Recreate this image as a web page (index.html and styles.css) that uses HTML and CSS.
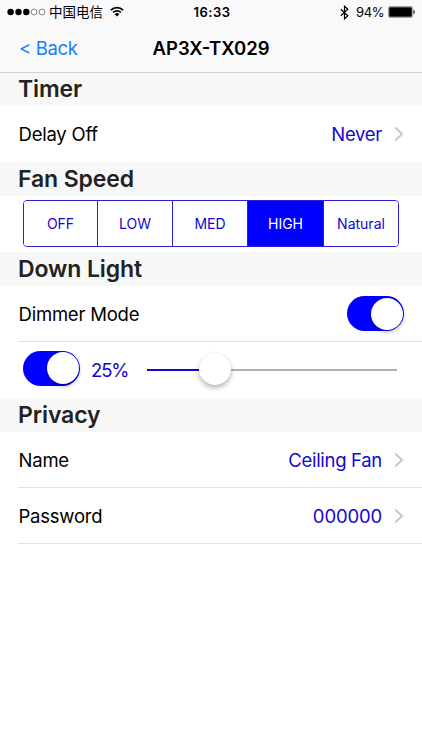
FILE: index.html
```html
<!DOCTYPE html>
<html lang="en">
<head>
    <meta charset="UTF-8">
    <meta name="viewport" content="width=device-width, initial-scale=1.0">
    <title>AP3X-TX029</title>
    <link rel="stylesheet" href="styles.css">
</head>
<body>
    <header class="top">
        <div class="status-bar">
            <div class="status-left">
                <svg class="signal" width="39" height="8" viewBox="0 0 39 8">
                    <circle cx="3.6" cy="4" r="3.2"/>
                    <circle cx="11.5" cy="4" r="3.2"/>
                    <circle cx="19.3" cy="4" r="3.2"/>
                    <circle class="empty" cx="27.1" cy="4" r="2.9"/>
                    <circle class="empty" cx="35" cy="4" r="2.9"/>
                </svg>
                <span class="carrier">中国电信</span>
                <svg class="wifi" width="14" height="11" viewBox="0 0 14 11">
                    <path d="M.9 4.1a8.7 8.7 0 0 1 12.2 0M3.1 6.4a5.6 5.6 0 0 1 7.8 0"/>
                    <path class="dot" d="M7 10.6 4.7 8.2a3.3 3.3 0 0 1 4.6 0z"/>
                </svg>
            </div>
            <span class="clock">16:33</span>
            <div class="status-right">
                <svg class="bluetooth" width="9" height="15" viewBox="0 0 9 15">
                    <path d="M.8 4.2l7 6.6-3.3 3V1.2l3.3 3-7 6.6"/>
                </svg>
                <span class="percent">94%</span>
                <svg class="battery" width="27" height="12" viewBox="0 0 27 12">
                    <rect class="shell" x=".5" y=".5" width="24.2" height="11" rx="1.6"/>
                    <rect x="1.2" y="1.2" width="22.6" height="9.6" rx=".8"/>
                    <path d="M25.5 4.1c1.6.3 1.6 3.5 0 3.8z"/>
                </svg>
            </div>
        </div>
        <nav class="nav-bar">
            <a class="back" href="#">&lt; Back</a>
            <h1>AP3X-TX029</h1>
        </nav>
    </header>

    <main>
        <h2>Timer</h2>
        <div class="row">
            <span class="label">Delay Off</span>
            <span class="value">Never</span>
            <svg class="chevron" width="10" height="16" viewBox="0 0 10 16"><path d="M1.2 1.5 8 8l-6.8 6.5"/></svg>
        </div>

        <h2>Fan Speed</h2>
        <div class="row speed-row">
            <div class="segments">
                <button>OFF</button>
                <button>LOW</button>
                <button>MED</button>
                <button class="active">HIGH</button>
                <button>Natural</button>
            </div>
        </div>

        <h2>Down Light</h2>
        <div class="row lined">
            <span class="label">Dimmer Mode</span>
            <span class="switch"></span>
        </div>
        <div class="row dimmer-row">
            <span class="switch"></span>
            <span class="level">25%</span>
            <div class="slider">
                <div class="fill" style="width: 27.2%"></div>
                <div class="thumb"></div>
            </div>
        </div>

        <h2>Privacy</h2>
        <div class="row lined">
            <span class="label">Name</span>
            <span class="value">Ceiling Fan</span>
            <svg class="chevron" width="10" height="16" viewBox="0 0 10 16"><path d="M1.2 1.5 8 8l-6.8 6.5"/></svg>
        </div>
        <div class="row lined">
            <span class="label">Password</span>
            <span class="value digits">000000</span>
            <svg class="chevron" width="10" height="16" viewBox="0 0 10 16"><path d="M1.2 1.5 8 8l-6.8 6.5"/></svg>
        </div>
    </main>
</body>
</html>
```
FILE: styles.css
```css
* {
    box-sizing: border-box;
}
body {
    margin: 0;
    background: #fff;
    color: #000;
    font-family: Inter, "Noto Sans CJK SC", sans-serif;
    font-size: 18.5px;
    letter-spacing: -0.22px;
}
.top {
    height: 73px;
    background: #f9f9f9;
    border-bottom: 1px solid #d2d2d2;
}
.status-bar {
    display: grid;
    grid-template-columns: 1fr auto 1fr;
    align-items: center;
    height: 24px;
    padding: 0 7px;
    font-size: 13px;
}
.status-left,
.status-right {
    display: flex;
    align-items: center;
}
.status-right {
    justify-content: flex-end;
}
.signal .empty {
    fill: none;
    stroke: #555;
    stroke-width: 0.7;
}
.carrier {
    margin-left: 3px;
    padding-bottom: 2px;
    font-family: "Noto Sans CJK SC", sans-serif;
    font-size: 13.5px;
    line-height: 22px;
    letter-spacing: 0;
}
.wifi {
    margin: 0 0 2px 7px;
}
.wifi path {
    fill: none;
    stroke: #000;
    stroke-width: 1.7;
}
.wifi .dot {
    fill: #000;
    stroke: none;
}
.clock {
    padding-left: 2px;
    font-weight: 600;
    font-size: 13px;
    letter-spacing: 0.5px;
}
.bluetooth {
    margin-right: 7px;
}
.bluetooth path {
    fill: none;
    stroke: #000;
    stroke-width: 1.2;
}
.percent {
    margin-right: 4px;
    letter-spacing: -0.4px;
}
.battery .shell {
    fill: none;
    stroke: #777;
    stroke-width: 0.7;
}
.nav-bar {
    display: grid;
    grid-template-columns: 1fr auto 1fr;
    align-items: center;
    height: 48px;
    padding: 0 19px;
}
.back {
    color: #147efb;
    text-decoration: none;
    letter-spacing: -0.35px;
}
h1 {
    margin: 0;
    font-size: 18.5px;
    font-weight: 600;
    letter-spacing: 0;
}
h2 {
    height: 34px;
    margin: 0;
    padding-left: 18px;
    background: #f7f7f7;
    color: #222;
    font-size: 23px;
    font-weight: 600;
    line-height: 34px;
    letter-spacing: -0.1px;
}
.top + main h2:first-child {
    height: 33px;
    line-height: 33px;
}
.row {
    display: flex;
    align-items: center;
    height: 56px;
    padding: 0 18px;
}
.lined {
    margin-left: 18px;
    padding-left: 0;
    border-bottom: 1px solid #e2e2e4;
}
.label {
    flex: 1;
    padding-left: 0.5px;
}
.value,
.level {
    color: #1208cf;
}
.value {
    letter-spacing: -0.3px;
}
.digits {
    letter-spacing: -0.15px;
}
.chevron {
    margin-left: 12px;
}
.chevron path {
    fill: none;
    stroke: #c7c7cc;
    stroke-width: 2;
}
.speed-row {
    padding: 0 23px 1px;
}
.segments {
    display: grid;
    grid-template-columns: 74px 75px 75px 76px 1fr;
    width: 100%;
    height: 47px;
    border: 1px solid #2a20d8;
    border-radius: 4px;
    overflow: hidden;
}
.segments button {
    padding: 0;
    border: 0;
    border-right: 1px solid #2a20d8;
    background: #fff;
    color: #1208cf;
    font-family: inherit;
    font-size: 14px;
    letter-spacing: 0;
}
.segments button:last-child {
    border-right: 0;
}
.segments .active {
    background: #00f;
    color: #fff;
}
.switch {
    display: flex;
    justify-content: flex-end;
    width: 57px;
    height: 35px;
    padding: 1.5px;
    border-radius: 18px;
    background: #00f;
}
.switch::after {
    content: "";
    width: 32px;
    height: 32px;
    border-radius: 50%;
    background: #fff;
    box-shadow: 0 2px 4px rgba(0, 0, 0, 0.3);
}
.dimmer-row {
    padding: 0 25px 4px 23px;
}
.level {
    width: 56px;
    margin-left: 11px;
    padding-top: 4px;
    letter-spacing: -1.1px;
}
.slider {
    display: flex;
    flex: 1;
    align-items: center;
    height: 32px;
    margin-top: 4px;
    background: linear-gradient(#b2b2b2, #b2b2b2) center / 100% 2px no-repeat;
}
.fill {
    height: 2px;
    background: #1208cf;
}
.thumb {
    width: 32px;
    height: 32px;
    margin: -2px 0 0 -16px;
    border-radius: 50%;
    background: #fff;
    box-shadow: 0 3px 5px rgba(0, 0, 0, 0.28), 0 0 1px rgba(0, 0, 0, 0.15);
}
```
